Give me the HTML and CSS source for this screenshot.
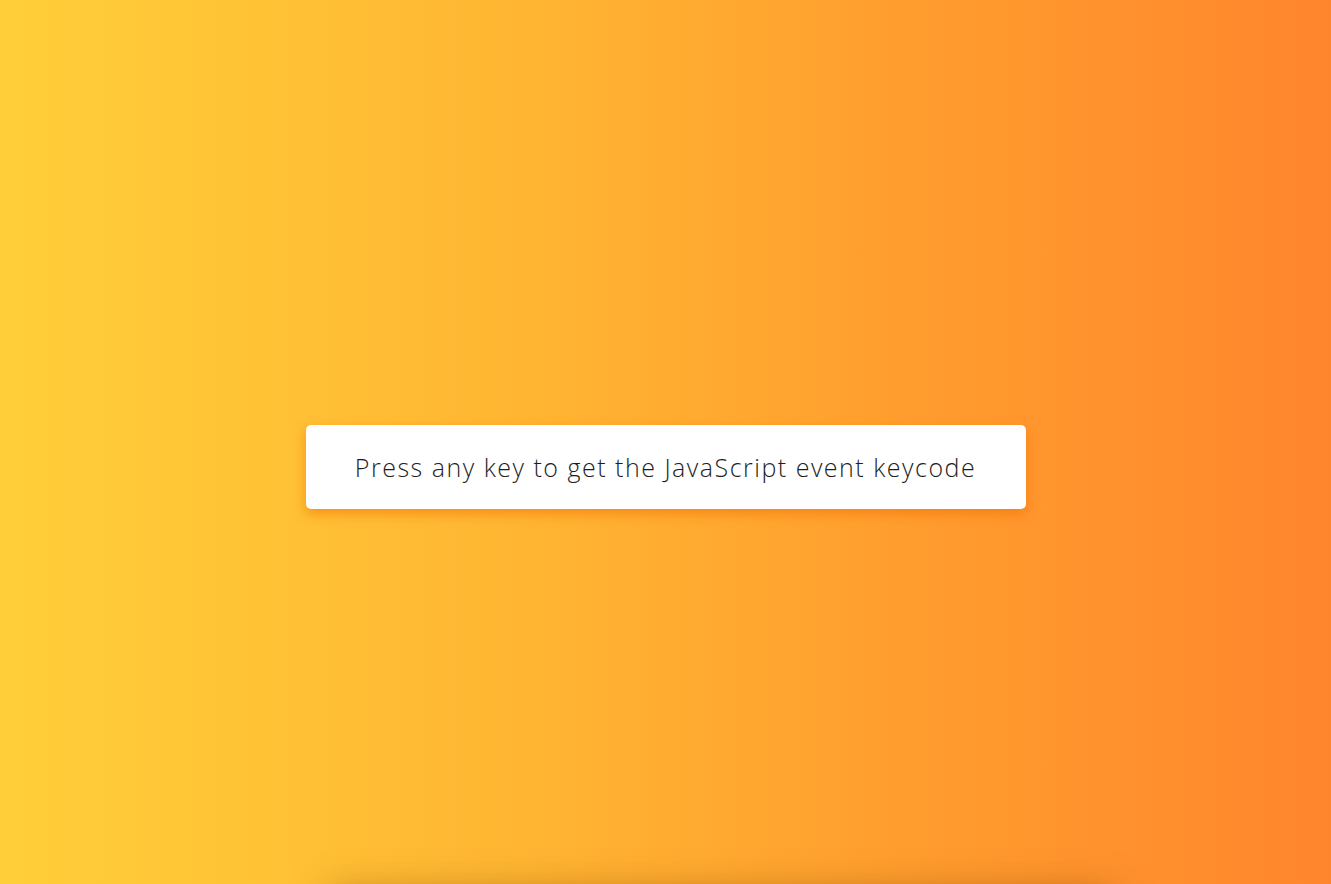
FILE: index.html
```html
<!DOCTYPE html>
<html lang="en">
<head>
<meta charset="utf-8">
<title>JavaScript Keycode</title>
<link rel="stylesheet" href="styles.css">
</head>
<body>
<main class="page">
  <div class="card">
    <p class="prompt">Press any key to get the JavaScript event keycode</p>
  </div>
  <div class="result"></div>
</main>
</body>
</html>
```
FILE: styles.css
```css
html, body {
  margin: 0;
  height: 100%;
  overflow: hidden;
}
body {
  background: linear-gradient(90deg, #ffcf39 0%, #ffb532 40%, #ff9c2e 70%, #ff852d 100%);
  font-family: "Open Sans", "Liberation Sans", sans-serif;
}
.page {
  display: flex;
  flex-direction: column;
  align-items: center;
  padding-top: 425px;
}
.card {
  width: 720px;
  height: 84px;
  box-sizing: border-box;
  background: #fff;
  border-radius: 5px;
  box-shadow: 0 5px 12px rgba(240, 110, 0, 0.55);
  display: flex;
  align-items: center;
  justify-content: center;
}
.prompt {
  margin: 0;
  font-size: 25px;
  font-weight: 300;
  color: #1e1e1e;
  letter-spacing: 1.5px;
}
.result {
  margin-top: 400px;
  margin-left: 110px;
  width: 780px;
  height: 100px;
  background: transparent;
  box-shadow: 0 -12px 40px rgba(130, 70, 0, 0.65);
}
```
